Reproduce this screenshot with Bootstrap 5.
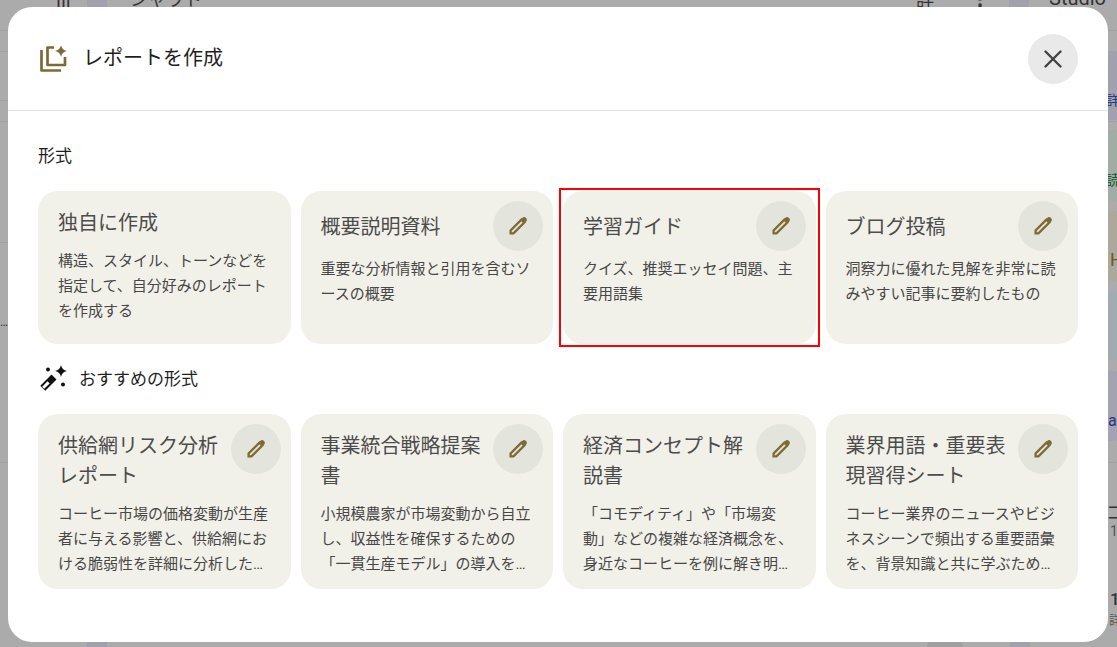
<!DOCTYPE html>
<html lang="ja">
<head>
<meta charset="UTF-8">
<meta name="viewport" content="width=device-width, initial-scale=1.0">
<link href="https://cdn.jsdelivr.net/npm/bootstrap@5.3.3/dist/css/bootstrap.min.css" rel="stylesheet">
<title>レポートを作成</title>
<style>
html, body { height: 100%; }
body { background: #ababab; overflow: hidden; padding: 7px 9px 5px 8px; font-family: Roboto, "Noto Sans CJK JP", sans-serif; color: #1f1f1f; }

/* page dimmed behind the dialog */
.behind { position: absolute; background: #a1a1ae; }
.behind-line { position: absolute; background: #a0a0a4; height: 1px; left: 0; width: 1117px; }
.behind-text { position: absolute; color: #333; white-space: nowrap; line-height: 1; }

.report-dialog { position: relative; height: 635px; background: #fff; border-radius: 24px; }
.report-head { height: 104px; padding: 0 30px 0 32px; border-bottom: 1px solid #dfe1ea; }
.report-head h1 { font-size: 20px; font-weight: 400; margin: 0 0 2px 15px; color: #1f1f1f; }
.close-round { width: 50px; height: 50px; padding: 0; border: 0; border-radius: 50%; background: #e9e9e9; }
.report-body { padding: 0 30px; }
.section-label { font-size: 17px; line-height: 24px; color: #1f1f1f; }
.label-first { margin: 33px 0 23px; }
.label-second { margin: 21px 0 21px 2px; gap: 11px; height: 28px; }
.report-grid { display: grid; grid-template-columns: repeat(4, 1fr); gap: 10px; }
.report-tile { position: relative; background: #f2f1e9; border-radius: 20px; padding: 0 20px; }
.tile-short { padding-bottom: 20px; }
.tile-tall { padding-bottom: 12px; }
.tile-marked::after { content: ""; position: absolute; inset: -3px -4px; border: 2px solid #f00; }
.tile-head { display: flex; justify-content: space-between; align-items: flex-start; margin: 10px -10px 0 0; }
.tile-head-one { align-items: center; height: 50px; margin-bottom: -5px; }
.tile-title { font-size: 20px; line-height: 30px; font-weight: 400; color: #4c4c4c; margin: 7px 0 0; }
.tile-head-one .tile-title { margin-top: 0; padding-top: 2px; }
.tile-plain .tile-title { margin-top: 17px; }
.tile-text { font-size: 15px; line-height: 25px; color: #474747; margin: 11px 0 0; line-break: loose; display: -webkit-box; -webkit-box-orient: vertical; -webkit-line-clamp: 3; overflow: hidden; }
.pencil-round { flex: none; width: 50px; height: 50px; padding: 0; border: 0; border-radius: 50%; background: #e3e4dc; margin-left: 10px; }
</style>
</head>
<body>
    <div class="behind-line" style="top: 30px"></div>
    <div class="behind-line" style="top: 51px"></div>
    <div class="behind-line" style="top: 100px"></div>
    <div class="behind-line" style="top: 121px"></div>
    <div class="behind-line" style="top: 242px"></div>
    <div class="behind-line" style="top: 462px"></div>
    <div class="behind" style="left: 87px; top: 0; width: 20px; height: 7px"></div>
    <div class="behind" style="left: 1009px; top: 0; width: 20px; height: 7px"></div>
    <div class="behind" style="left: 87px; top: 640px; width: 20px; height: 7px"></div>
    <div class="behind" style="left: 1010px; top: 640px; width: 20px; height: 7px"></div>
    <div class="behind" style="left: 1108px; top: 51px; width: 9px; height: 69px"></div>
    <div class="behind" style="left: 1108px; top: 130px; width: 9px; height: 71px; background: #a0aca4"></div>
    <div class="behind" style="left: 1108px; top: 211px; width: 9px; height: 70px; background: #aca89c"></div>
    <div class="behind" style="left: 1108px; top: 291px; width: 9px; height: 69px; background: #a0acb0"></div>
    <div class="behind" style="left: 1108px; top: 371px; width: 9px; height: 70px; background: #a4a4b0"></div>
    <div class="behind" style="left: 927px; top: 640px; width: 36px; height: 7px; border-radius: 18px 18px 0 0; background: #a0a0a0"></div>
    <div class="behind-text" style="left: 130px; top: -9px; font-size: 18px">ンャウト</div>
    <div class="behind-text" style="left: 1049px; top: -12px; font-size: 20px">Studio</div>
    <div class="behind-text" style="left: 56px; top: -8px; font-size: 18px">III</div>
    <div class="behind-text" style="left: 916px; top: -9px; font-size: 18px">詳</div>
    <div class="behind-text" style="left: 969px; top: -13px; font-size: 22px; font-weight: 700">⋮</div>
    <div class="behind-text" style="left: 0; top: 316px; font-size: 12px">…</div>
    <div class="behind-text" style="left: 1106px; top: 93px; font-size: 14px; color: #1f3a80">詳</div>
    <div class="behind-text" style="left: 1106px; top: 173px; font-size: 14px; color: #17552f">読</div>
    <div class="behind-text" style="left: 1110px; top: 251px; font-size: 18px; color: #6a5a2a">H</div>
    <div class="behind-text" style="left: 1108px; top: 413px; font-size: 16px; color: #1f3a80">a</div>
    <div class="behind-text" style="left: 1106px; top: 504px; font-size: 18px">コ</div>
    <div class="behind-text" style="left: 1110px; top: 524px; font-size: 14px; color: #555">1</div>
    <div class="behind-text" style="left: 1110px; top: 591px; font-size: 17px; font-weight: 500">1</div>
    <div class="behind-text" style="left: 1109px; top: 615px; font-size: 12px; color: #555">詳</div>

    <div class="report-dialog">
        <div class="report-head d-flex align-items-center">
            <svg width="28" height="28" viewBox="40 45 28 28" fill="none" stroke="#7d6a35" stroke-width="2.7" stroke-linejoin="round">
                <path d="M41.5 50V70.5H61"/>
                <path d="M54 47.5H47.5V65H65V57"/>
                <path fill="#7d6a35" stroke="none" d="M61 45Q61.8 50.2 67 51Q61.8 51.8 61 57Q60.2 51.8 55 51Q60.2 50.2 61 45Z"/>
            </svg>
            <h1>レポートを作成</h1>
            <button type="button" class="close-round ms-auto d-flex align-items-center justify-content-center" aria-label="閉じる">
                <svg width="18" height="18" viewBox="0 0 18 18" stroke="#444" stroke-width="2.4" stroke-linecap="round"><path d="M1.5 1.5L16.5 16.5M16.5 1.5L1.5 16.5"/></svg>
            </button>
        </div>
        <div class="report-body">
            <div class="section-label label-first">形式</div>
            <div class="report-grid">
                <div class="report-tile tile-short tile-plain">
                    <h2 class="tile-title">独自に作成</h2>
                    <p class="tile-text">構造、スタイル、トーンなどを指定して、自分好みのレポートを作成する</p>
                </div>
                <div class="report-tile tile-short">
                    <div class="tile-head tile-head-one">
                        <h2 class="tile-title">概要説明資料</h2>
                        <button type="button" class="pencil-round"><svg width="24" height="24" viewBox="0 0 24 24"><use href="#pencil"/></svg></button>
                    </div>
                    <p class="tile-text">重要な分析情報と引用を含むソースの概要</p>
                </div>
                <div class="report-tile tile-short tile-marked">
                    <div class="tile-head tile-head-one">
                        <h2 class="tile-title">学習ガイド</h2>
                        <button type="button" class="pencil-round"><svg width="24" height="24" viewBox="0 0 24 24"><use href="#pencil"/></svg></button>
                    </div>
                    <p class="tile-text">クイズ、推奨エッセイ問題、主要用語集</p>
                </div>
                <div class="report-tile tile-short">
                    <div class="tile-head tile-head-one">
                        <h2 class="tile-title">ブログ投稿</h2>
                        <button type="button" class="pencil-round"><svg width="24" height="24" viewBox="0 0 24 24"><use href="#pencil"/></svg></button>
                    </div>
                    <p class="tile-text">洞察力に優れた見解を非常に読みやすい記事に要約したもの</p>
                </div>
            </div>

            <div class="section-label label-second d-flex align-items-center">
                <svg width="28" height="28" viewBox="40 364 28 28" fill="none">
                    <path d="M42.8 387.2L54 376" stroke="#111" stroke-width="7"/>
                    <path d="M43.2 386.8L48.6 381.4" stroke="#fff" stroke-width="3"/>
                    <path fill="#111" d="M61 364Q61.9 369.1 67 370Q61.9 370.9 61 376Q60.1 370.9 55 370Q60.1 369.1 61 364Z"/>
                    <circle cx="48" cy="368.5" r="2" fill="#111"/>
                    <circle cx="63" cy="383.5" r="2" fill="#111"/>
                </svg>
                <span>おすすめの形式</span>
            </div>

            <div class="report-grid">
                <div class="report-tile tile-tall">
                    <div class="tile-head">
                        <h2 class="tile-title">供給網リスク分析レポート</h2>
                        <button type="button" class="pencil-round"><svg width="24" height="24" viewBox="0 0 24 24"><use href="#pencil"/></svg></button>
                    </div>
                    <p class="tile-text">コーヒー市場の価格変動が生産者に与える影響と、供給網における脆弱性を詳細に分析した専門的なレポートです。</p>
                </div>
                <div class="report-tile tile-tall">
                    <div class="tile-head">
                        <h2 class="tile-title">事業統合戦略提案書</h2>
                        <button type="button" class="pencil-round"><svg width="24" height="24" viewBox="0 0 24 24"><use href="#pencil"/></svg></button>
                    </div>
                    <p class="tile-text">小規模農家が市場変動から自立し、収益性を確保するための「一貫生産モデル」の導入を提案する文書です。</p>
                </div>
                <div class="report-tile tile-tall">
                    <div class="tile-head">
                        <h2 class="tile-title">経済コンセプト解説書</h2>
                        <button type="button" class="pencil-round"><svg width="24" height="24" viewBox="0 0 24 24"><use href="#pencil"/></svg></button>
                    </div>
                    <p class="tile-text">「コモディティ」や「市場変動」などの複雑な経済概念を、身近なコーヒーを例に解き明かす解説書です。</p>
                </div>
                <div class="report-tile tile-tall">
                    <div class="tile-head">
                        <h2 class="tile-title">業界用語・重要表現習得シート</h2>
                        <button type="button" class="pencil-round"><svg width="24" height="24" viewBox="0 0 24 24"><use href="#pencil"/></svg></button>
                    </div>
                    <p class="tile-text">コーヒー業界のニュースやビジネスシーンで頻出する重要語彙を、背景知識と共に学ぶための学習シートです。</p>
                </div>
            </div>
        </div>
    </div>

    <svg width="0" height="0" class="d-block">
        <symbol id="pencil" viewBox="0 0 24 24">
            <path fill="none" stroke="#7d6a35" stroke-width="2.3" d="M4.6 19.4V16.5L15.4 5.7L18.3 8.6L7.5 19.4Z"/>
            <path fill="#7d6a35" d="M15.4 4.8L16.2 4A2.6 2.6 0 0 1 20 7.8L19.2 8.6Z"/>
        </symbol>
    </svg>
</body>
</html>
